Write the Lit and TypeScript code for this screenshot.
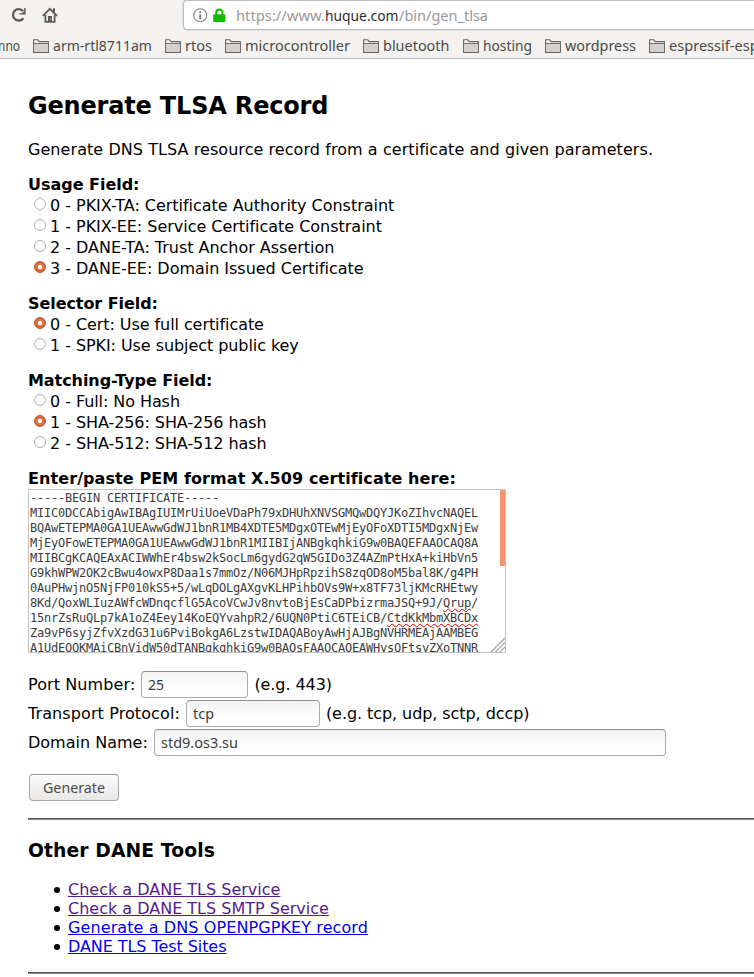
import { LitElement, html, svg, css } from "lit";
import { customElement, property } from "lit/decorators.js";

/** One line of toolbar text, fitted to a given width. */
@customElement("fit-text")
class FitText extends LitElement {
  @property() text = "";
  @property({ type: Number }) w = 50;
  @property({ type: Number }) size = 14.5;
  static styles = css`
    :host { display: block; flex: none; height: 22px; }
    svg { display: block; overflow: visible; height: 22px; }
    text { font-family: "Noto Sans", "Open Sans", sans-serif; fill: currentColor; white-space: pre; }
  `;
  render() {
    return html`<svg width=${this.w} height="22">${svg`<text x="0" y="16" font-size=${this.size} textLength=${this.w} lengthAdjust="spacingAndGlyphs">${this.text}</text>`}</svg>`;
  }
}

@customElement("browser-bar")
class BrowserBar extends LitElement {
  static styles = css`
    :host { display: block; height: 58px; background: #f3f2f1; border-bottom: 1px solid #bebbb8; overflow: hidden; color: #4a4a46; }
    .nav { display: flex; align-items: flex-start; height: 30px; padding-left: 10px; }
    .reload { margin-top: 7px; flex: none; }
    .home { margin: 7px 0 0 15px; flex: none; }
    .url { box-sizing: border-box; flex: 1; height: 30px; margin-left: 124px; margin-right: -8px; background: #fff;
      border: 1px solid #c0bdba; border-radius: 4px; display: flex; padding-left: 9px; box-shadow: 0 0 0 0.5px #d2cfcd; }
    .info { margin-top: 7px; flex: none; }
    .lock { margin: 7px 0 0 5px; flex: none; }
    .parts { display: flex; margin: 4px 0 0 10px; color: #999; }
    .host { color: #2e2e2e; }
    .marks { display: flex; height: 28px; margin-left: -2px; }
    .mark { display: flex; flex: none; margin-right: 13px; }
    .mark svg { margin: 9px 4px 0 0; flex: none; }
    .mark fit-text { margin-top: 5px; }
  `;
  marks: [string, number][] = [["arm-rtl8711am", 99], ["rtos", 27], ["microcontroller", 105], ["bluetooth", 66.5], ["hosting", 49], ["wordpress", 71], ["espressif-esp8266", 123]];
  render() {
    return html`
      <div class="nav">
        <svg class="reload" width="17" height="17" viewBox="0 0 17 17">
          <path d="M13 4.1A5.7 5.7 0 1 0 13.3 11.2" fill="none" stroke="#5d5b57" stroke-width="2.3"/>
          <path d="M15.6 1v6.4H9.3V6.3H11.9L14.2 4V1z" fill="#5d5b57"/>
        </svg>
        <svg class="home" width="17" height="17" viewBox="0 0 17 17">
          <path d="M.8 8.9L7.9 1.8 15 8.9M12 1.2V5" fill="none" stroke="#5d5b57" stroke-width="2"/>
          <path d="M3.4 8V14.9H12.6V8" fill="none" stroke="#5d5b57" stroke-width="1.8"/>
          <path d="M6 15V9H10V15z" fill="#5d5b57"/><circle cx="8.7" cy="12" r=".6" fill="#ddd"/>
        </svg>
        <div class="url">
          <svg class="info" width="15" height="15" viewBox="0 0 15 15">
            <circle cx="7.2" cy="7.2" r="6.5" fill="none" stroke="#85827f" stroke-width="1.1"/>
            <path d="M7.2 6.2V11.2M7.2 3.4V5.1" stroke="#777" stroke-width="1.8"/>
          </svg>
          <svg class="lock" width="13" height="15" viewBox="0 0 13 15">
            <path d="M3.2 7V4.6a3.1 3.1 0 0 1 6.2 0V7" fill="none" stroke="#12bc00" stroke-width="2"/>
            <rect x=".2" y="6.3" width="12.2" height="7.8" rx="1" fill="#12bc00"/>
          </svg>
          <div class="parts">
            <fit-text text="https://www." w="89"></fit-text>
            <fit-text class="host" text="huque.com" w="73.5"></fit-text>
            <fit-text text="/bin/gen_tlsa" w="89"></fit-text>
          </div>
        </div>
      </div>
      <div class="marks">
        <div class="mark"><fit-text text="nno" w="22"></fit-text></div>
        ${this.marks.map(([t, w]) => html`<div class="mark">
          <svg width="16" height="14" viewBox="0 0 16 14">
            <path d="M.6 13.4V.8H4.8L6.2 2.6H15.4V13.4z" fill="#f3f2f1" stroke="#666462" stroke-width="1.1" stroke-linejoin="round"/>
            <path d="M1.1 4.6H14.9V12.9H1.1z" fill="#d2d1cf"/><path d="M1 4.5H15" fill="none" stroke="#666462" stroke-width=".9"/>
          </svg><fit-text text=${t} w=${w}></fit-text></div>`)}
      </div>`;
  }
}

@customElement("radio-group")
class RadioGroup extends LitElement {
  @property() heading = "";
  @property({ type: Array }) options: string[] = [];
  @property({ type: Number }) selected = 0;
  static styles = css`
    :host { display: block; margin-bottom: 14px; }
    .head { font-weight: bold; height: 21px; line-height: 21px; }
    .row { display: flex; height: 21px; line-height: 21px; white-space: nowrap; }
    .dot { flex: none; box-sizing: border-box; width: 12px; height: 12px; margin: 3px 4px 0 6px; border-radius: 50%; border: 1px solid #b5b3b0; background: #fff; }
    .on { border-color: #b4532c; background: radial-gradient(circle, #fff 0 1.8px, #dd6d3f 2.6px); }
  `;
  render() {
    return html`<div class="head">${this.heading}</div>
      ${this.options.map((o, i) => html`<div class="row" role="radio" aria-checked=${i === this.selected}>
        <span class="dot ${i === this.selected ? "on" : ""}"></span><span>${i} - ${o}</span></div>`)}`;
  }
}

@customElement("app-root")
class AppRoot extends LitElement {
  static styles = css`
    :host { display: block; height: 977px; overflow: hidden; background: #fff; color: #000; font: 16px/19px "DejaVu Sans", sans-serif; }
    .page { padding-left: 28px; }
    h2 { margin: 0; padding-top: 33px; font-size: 24px; line-height: 28px; letter-spacing: -0.18px; }
    .intro { margin: 20px 0 14px; height: 20px; line-height: 20px; white-space: nowrap; letter-spacing: 0.065px; }
    .usage { letter-spacing: -0.025px; }
    .tight { letter-spacing: -0.07px; }
    .label { font-weight: bold; height: 21px; line-height: 21px; letter-spacing: 0.085px; }
    .cert { position: relative; box-sizing: border-box; width: 478px; height: 164px; border: 1px solid #c5c3c1; overflow: hidden; padding: 1px 1px 0;
      font: 12px/15px "DejaVu Sans Mono", monospace; letter-spacing: -0.225px; color: #3c3c3c; white-space: pre; }
    .bad { text-decoration: underline wavy #e00000 1px; text-underline-offset: 1px; text-decoration-skip-ink: none; }
    .thumb { position: absolute; right: 0; top: 0; width: 5px; height: 76px; background: #f3926b; border-radius: 1px; }
    .grip { position: absolute; right: 0; bottom: 0; }
    .fields { padding-top: 17px; }
    .field { display: flex; height: 29px; line-height: 29px; white-space: nowrap; }
    .input { box-sizing: border-box; height: 27px; margin: 1px 6px 0; padding-left: 6px; border: 1px solid #aaa; border-top-color: #8e8e8e; border-radius: 4px;
      background: linear-gradient(#f2f2f2, #fdfdfd 60%, #fff); color: #3c3c3c; display: flex; }
    .input fit-text { margin-top: 2px; }
    .wide { letter-spacing: 0.1px; }
    .port { width: 107px; } .proto { width: 134px; } .domain { width: 512px; }
    .button { box-sizing: border-box; display: flex; width: 90px; height: 27px; margin: 17px 0 0 1px; padding: 2px 0 0 13px; border: 1px solid #aaa7a4; border-top-color: #949494; border-radius: 4px;
      background: linear-gradient(#fbfbfb, #f0efee 60%, #e8e7e5); color: #4a4a46; }
    .rule { height: 1px; border-top: 1px solid #555; background: #888; }
    .first { margin-top: 17px; }
    h3 { margin: 19px 0 17px; font-size: 18.72px; line-height: 24px; letter-spacing: 0.12px; }
    ul { margin: 0 0 16px; padding: 0 0 0 40px; list-style: none; }
    li { position: relative; height: 19px; white-space: nowrap; }
    li::before { content: ""; position: absolute; left: -14px; top: 7px; width: 6px; height: 6px; border-radius: 50%; background: #000; }
    a { color: #0000ee; text-decoration: underline; text-decoration-skip-ink: none; }
    .seen { color: #551a8b; }
  `;
  render() {
    const pem = `-----BEGIN CERTIFICATE-----
MIIC0DCCAbigAwIBAgIUIMrUiUoeVDaPh79xDHUhXNVSGMQwDQYJKoZIhvcNAQEL
BQAwETEPMA0GA1UEAwwGdWJ1bnR1MB4XDTE5MDgxOTEwMjEyOFoXDTI5MDgxNjEw
MjEyOFowETEPMA0GA1UEAwwGdWJ1bnR1MIIBIjANBgkqhkiG9w0BAQEFAAOCAQ8A
MIIBCgKCAQEAxACIWWhEr4bsw2kSocLm6gydG2qW5GIDo3Z4AZmPtHxA+kiHbVn5
G9khWPW2OK2cBwu4owxP8Daa1s7mmOz/N06MJHpRpzihS8zqOD8oM5bal8K/g4PH
0AuPHwjnO5NjFP010kS5+5/wLqDOLgAXgvKLHPihbOVs9W+x8TF73ljKMcRHEtwy
8Kd/QoxWLIuzAWfcWDnqcflG5AcoVCwJv8nvtoBjEsCaDPbizrmaJSQ+9J/`;
    return html`
      <browser-bar></browser-bar>
      <div class="page">
        <h2>Generate TLSA Record</h2>
        <div class="intro">Generate DNS TLSA resource record from a certificate and given parameters.</div>
        <radio-group class="usage" heading="Usage Field:" .selected=${3} .options=${["PKIX-TA: Certificate Authority Constraint", "PKIX-EE: Service Certificate Constraint", "DANE-TA: Trust Anchor Assertion", "DANE-EE: Domain Issued Certificate"]}></radio-group>
        <radio-group class="tight" heading="Selector Field:" .selected=${0} .options=${["Cert: Use full certificate", "SPKI: Use subject public key"]}></radio-group>
        <radio-group class="tight" heading="Matching-Type Field:" .selected=${1} .options=${["Full: No Hash", "SHA-256: SHA-256 hash", "SHA-512: SHA-512 hash"]}></radio-group>
        <div class="label">Enter/paste PEM format X.509 certificate here:</div>
        <div class="cert">${pem}<span class="bad">Qrup</span>/
15nrZsRuQLp7kA1oZ4Eey14KoEQYvahpR2/6UQN0PtiC6TEiCB/<span class="bad">CtdKkMbmXBCDx</span>
Za9vP6syjZfvXzdG31u6PviBokgA6LzstwIDAQABoyAwHjAJBgNVHRMEAjAAMBEG
A1UdEQQKMAiCBnVidW50dTANBgkqhkiG9w0BAQsFAAOCAQEAWHysQFtsyZXoTNNR<span class="thumb"></span><svg class="grip" width="15" height="15" viewBox="0 0 15 15"><path d="M1 15L15 1M5.5 15L15 5.5M10 15L15 10" stroke="#aaa" stroke-width="1.4"/></svg></div>
        <div class="fields">
          <div class="field"><span class="wide">Port Number:</span><div class="input port"><fit-text text="25" w="16" size="14"></fit-text></div><span class="tight">(e.g. 443)</span></div>
          <div class="field"><span class="wide">Transport Protocol:</span><div class="input proto"><fit-text text="tcp" w="21" size="14"></fit-text></div><span class="tight">(e.g. tcp, udp, sctp, dccp)</span></div>
          <div class="field">Domain Name:<div class="input domain"><fit-text text="std9.os3.su" w="77" size="14"></fit-text></div></div>
        </div>
        <div class="button" role="button"><fit-text text="Generate" w="62" size="14"></fit-text></div>
        <div class="rule first"></div>
        <h3>Other DANE Tools</h3>
        <ul>
          <li><a class="seen">Check a DANE TLS Service</a></li>
          <li><a class="seen">Check a DANE TLS SMTP Service</a></li>
          <li><a class="wide">Generate a DNS OPENPGPKEY record</a></li>
          <li><a class="tight">DANE TLS Test Sites</a></li>
        </ul>
        <div class="rule"></div>
      </div>`;
  }
}
